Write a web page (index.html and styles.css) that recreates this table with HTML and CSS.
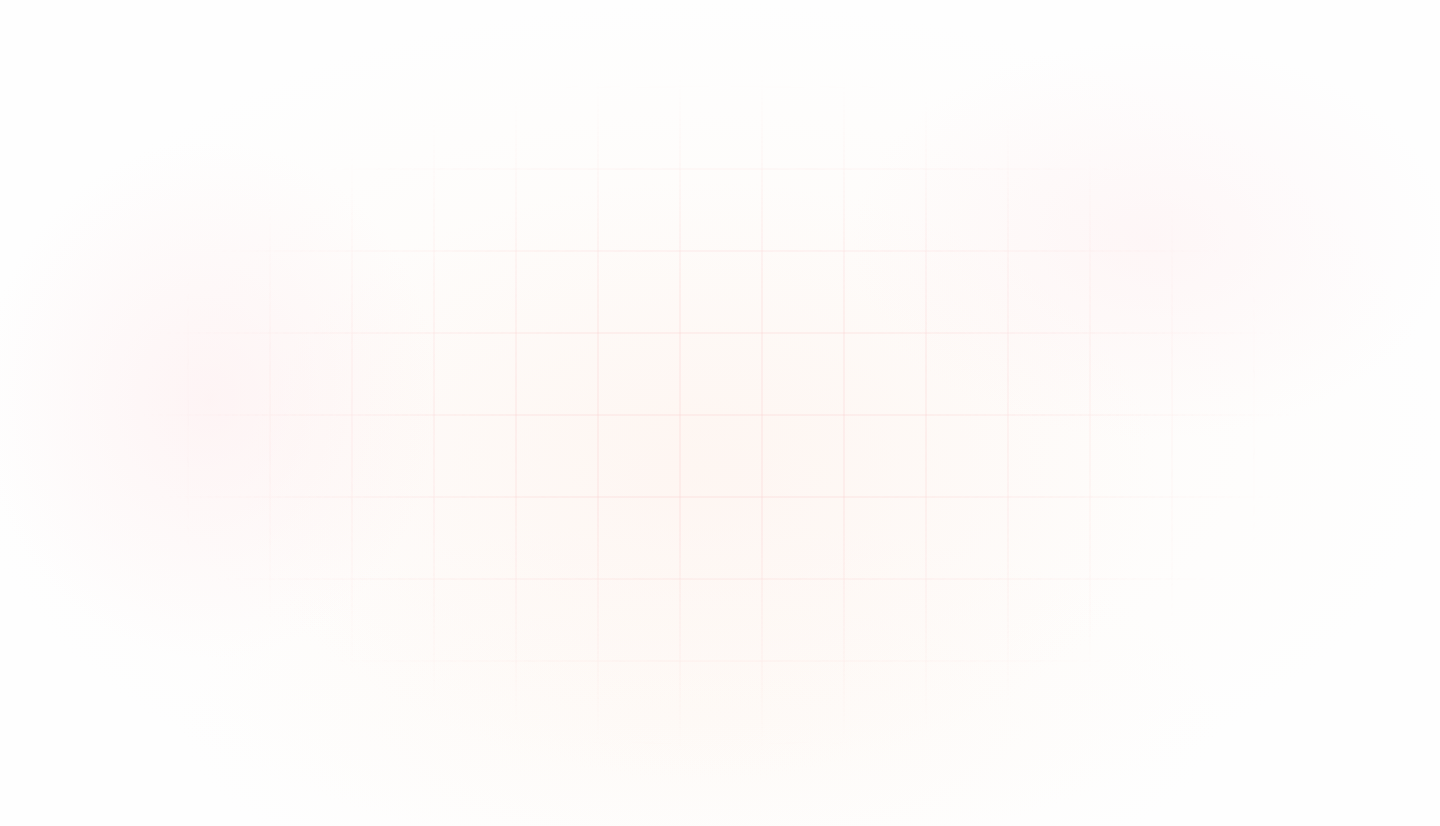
FILE: index.html
```html
<!DOCTYPE html>
<html lang="en">
<head>
<meta charset="utf-8">
<title>Background</title>
<link rel="stylesheet" href="styles.css">
</head>
<body>
<main class="page">
  <div class="grid" aria-hidden="true"></div>
</main>
</body>
</html>
```
FILE: styles.css
```css
html, body {
  margin: 0;
  padding: 0;
  height: 100%;
  font-family: "Inter", "Liberation Sans", sans-serif;
}
.page {
  min-height: 100vh;
  background-color: #fefefe;
  background-image:
    radial-gradient(ellipse 230px 260px at 210px 400px, rgba(255, 228, 232, 0.35), rgba(255, 228, 232, 0) 100%),
    radial-gradient(ellipse 300px 200px at 1150px 240px, rgba(255, 230, 234, 0.3), rgba(255, 230, 234, 0) 100%),
    radial-gradient(ellipse 460px 300px at 700px 480px, rgba(255, 236, 230, 0.3), rgba(255, 236, 230, 0) 100%),
    radial-gradient(ellipse 740px 430px at 700px 430px, rgba(255, 242, 232, 0.35), rgba(255, 242, 232, 0) 100%),
    radial-gradient(ellipse 520px 200px at 700px 720px, rgba(255, 244, 236, 0.3), rgba(255, 244, 236, 0) 100%);
  display: flex;
}
.grid {
  flex: 1;
  height: 100vh;
  background-image:
    linear-gradient(to right, rgba(250, 200, 200, 0.2) 0, rgba(250, 200, 200, 0.2) 1.5px, transparent 1.5px),
    linear-gradient(to bottom, rgba(250, 200, 200, 0.2) 0, rgba(250, 200, 200, 0.2) 1.5px, transparent 1.5px);
  background-size: 82px 82px;
  background-position: 23px 4px;
  -webkit-mask-image: radial-gradient(ellipse 580px 340px at 50% 50%, #000 35%, transparent 100%);
  mask-image: radial-gradient(ellipse 580px 340px at 50% 50%, #000 35%, transparent 100%);
}
```
